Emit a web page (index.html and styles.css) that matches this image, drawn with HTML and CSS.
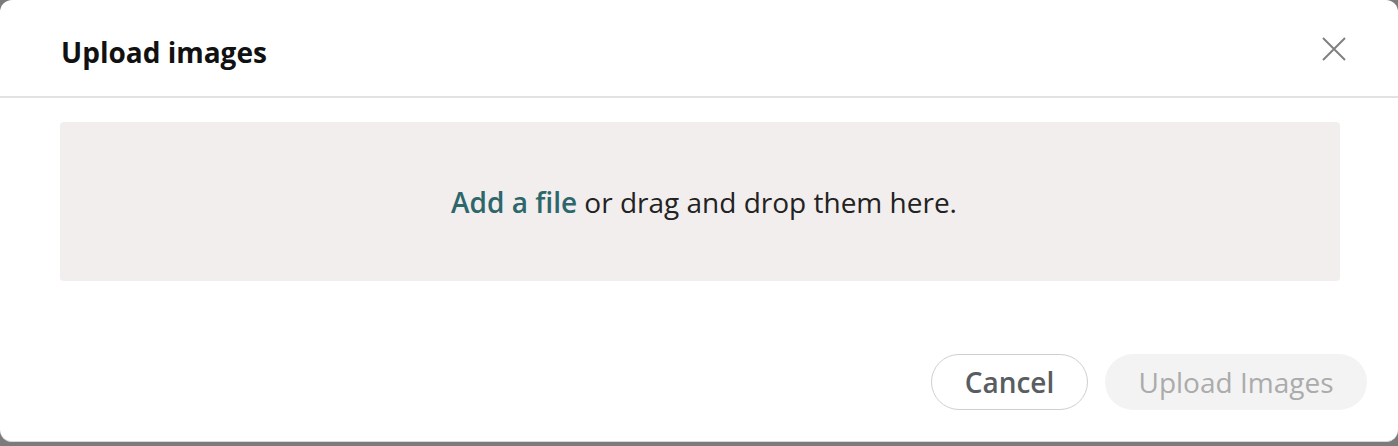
FILE: index.html
```html
<!DOCTYPE html>
<html>
<head>
<meta charset="utf-8">
<link rel="stylesheet" href="styles.css">
</head>
<body>
<div class="modal">
  <div class="modal-header">
    <h1 class="title">Upload images</h1>
    <button class="close" aria-label="Close">
      <svg width="24" height="24" viewBox="0 0 24 24"><path d="M1 1L23 23M23 1L1 23" stroke="#808080" stroke-width="2" fill="none"/></svg>
    </button>
  </div>
  <div class="modal-body">
    <div class="dropzone">
      <p class="drop-text"><span class="add">Add a file</span> or drag and drop them here.</p>
    </div>
  </div>
  <div class="modal-footer">
    <button class="btn btn-cancel">Cancel</button>
    <button class="btn btn-upload">Upload Images</button>
  </div>
</div>
</body>
</html>
```
FILE: styles.css
```css
html, body { margin: 0; padding: 0; }
body {
  background: #7b7b7b;
  font-family: "Open Sans", sans-serif;
  width: 1398px;
  height: 446px;
  overflow: hidden;
}
.modal {
  background: #fff;
  height: 441px;
  border-radius: 12px;
  border-bottom: 1px solid #d8d8d8;
  display: flex;
  flex-direction: column;
}
.modal-header {
  border-bottom: 2px solid #e2e2e2;
  display: flex;
  align-items: center;
  justify-content: space-between;
  padding: 0 52px 0 61px;
  box-sizing: border-box;
  height: 98px;
}
.title {
  margin: 0;
  font-size: 28px;
  font-weight: 700;
  color: #111;
  padding-top: 8px;
}
.close {
  border: none;
  background: none;
  padding: 0;
  margin-top: 2px;
  width: 24px;
  height: 24px;
  cursor: pointer;
}
.close svg { display: block; }
.modal-body {
  padding: 24px 58px 0 60px;
}
.dropzone {
  height: 159px;
  background: #f2eeed;
  border-radius: 4px;
  display: flex;
  align-items: center;
  justify-content: center;
  padding-left: 8px;
}
.drop-text {
  margin: 0;
  font-size: 28px;
  color: #222;
}
.add {
  color: #2d666b;
  font-weight: 600;
}
.modal-footer {
  display: flex;
  justify-content: flex-end;
  gap: 17px;
  padding: 73px 31px 0 0;
}
.btn {
  font-family: "Open Sans", sans-serif;
  font-size: 28px;
  height: 56px;
  border-radius: 28px;
  cursor: pointer;
  padding: 0;
}
.btn-cancel {
  width: 157px;
  background: #fff;
  border: 1px solid #cfcfcf;
  color: #585d61;
  font-weight: 600;
}
.btn-upload {
  width: 262px;
  background: #f3f3f3;
  border: none;
  color: #ababab;
  font-weight: 400;
}
```
